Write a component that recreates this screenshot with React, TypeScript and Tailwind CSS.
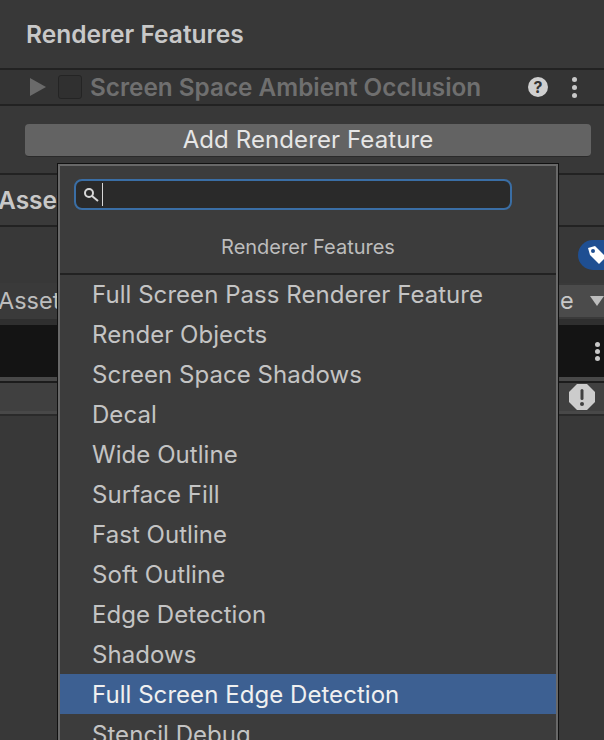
const items = [
  "Full Screen Pass Renderer Feature",
  "Render Objects",
  "Screen Space Shadows",
  "Decal",
  "Wide Outline",
  "Surface Fill",
  "Fast Outline",
  "Soft Outline",
  "Edge Detection",
  "Shadows",
  "Full Screen Edge Detection",
  "Stencil Debug",
];

const selected = "Full Screen Edge Detection";

export default function App() {
  return (
    <div className="relative h-[740px] w-[604px] overflow-hidden bg-[#383838] font-['Inter',sans-serif]">
      {/* Inspector behind the popup */}
      <div className="flex h-[70px] items-center border-b-2 border-[#222222] pl-[26px] pt-[1px]">
        <span className="text-[24.5px] font-semibold text-[#c8c8c8]">Renderer Features</span>
      </div>
      <div className="flex h-[36px] items-center border-b-2 border-[#222222] bg-[#343434] pl-[26px] pr-[27px]">
        <svg width="16" height="18" viewBox="0 0 16 18" className="ml-[4px]">
          <path d="M0 0 L16 9 L0 18 Z" fill="#6a6a6a" />
        </svg>
        <div className="ml-[12px] h-[24px] w-[24px] rounded-[3px] border border-[#242424] bg-[#303030]" />
        <span className="ml-[8px] text-[24.3px] font-semibold text-[#6f6f6f]">Screen Space Ambient Occlusion</span>
        <div className="ml-auto flex items-center gap-[24px]">
          <div className="flex h-[20px] w-[20px] items-center justify-center rounded-full bg-[#cfcfcf] text-[16px] font-bold text-[#343434]">?</div>
          <div className="flex flex-col gap-[3px]">
            <div className="h-[5px] w-[5px] rounded-full bg-[#c8c8c8]" />
            <div className="h-[5px] w-[5px] rounded-full bg-[#c8c8c8]" />
            <div className="h-[5px] w-[5px] rounded-full bg-[#c8c8c8]" />
          </div>
        </div>
      </div>
      <div className="h-[69px] border-b-2 border-[#222222] px-[25px] pt-[18px]">
        <div className="flex h-[33px] w-[566px] items-center justify-center rounded-[4px] border-b border-[#2a2a2a] bg-[#636363] text-[24px] tracking-[0.1px] text-[#e6e6e6]">
          Add Renderer Feature
        </div>
      </div>
      <div className="flex h-[52px] items-center border-b-2 border-[#222222] bg-[#3a3a3a]">
        <span className="-ml-[2px] text-[24.5px] font-semibold text-[#c8c8c8]">Asset</span>
      </div>
      <div className="flex h-[56px] items-center justify-end overflow-hidden">
        <div className="-mr-[22px] flex h-[30px] w-[48px] items-center rounded-full bg-[#1f4f92] pl-[9px]">
          <svg width="20" height="20" viewBox="0 0 20 20">
            <path d="M1 3 L8 1 L19 12 L12 19 L3 10 Z" fill="#ffffff" />
            <circle cx="6" cy="6" r="2" fill="#1f4f92" />
          </svg>
        </div>
      </div>
      <div className="flex h-[36px] items-center bg-[#3a3a3a] text-[23.5px] text-[#bdbdbd]">
        <span className="-ml-[2px] w-[560px]">Asset</span>
        <div className="flex h-[32px] flex-1 items-center justify-between bg-[#4b4b4b] pl-[2px]">
          <span className="text-[#c8c8c8]">e</span>
          <svg width="14" height="10" viewBox="0 0 14 10">
            <path d="M0 0 L14 0 L7 10 Z" fill="#bdbdbd" />
          </svg>
        </div>
      </div>
      <div className="h-[6px] bg-[#2f2f2f]" />
      <div className="flex h-[52px] items-center justify-end bg-[#141414] pr-[4px]">
        <div className="flex flex-col gap-[2px]">
          <div className="h-[5px] w-[5px] rounded-full bg-[#c8c8c8]" />
          <div className="h-[5px] w-[5px] rounded-full bg-[#c8c8c8]" />
          <div className="h-[5px] w-[5px] rounded-full bg-[#c8c8c8]" />
        </div>
      </div>
      <div className="h-[4px] bg-[#484848]" />
      <div className="h-[2px] bg-[#1c1c1c]" />
      <div className="flex h-[28px] items-center justify-end bg-[#404040] pr-[9px]">
        <svg width="26" height="26" viewBox="0 0 26 26">
          <path d="M8 0 H18 L26 8 V18 L18 26 H8 L0 18 V8 Z" fill="#cccccc" />
          <rect x="11.5" y="5" width="3" height="11" rx="1.5" fill="#404040" />
          <circle cx="13" cy="20" r="2" fill="#404040" />
        </svg>
      </div>
      <div className="h-[3px] bg-[#484848]" />
      <div className="h-[2px] bg-[#2a2a2a]" />

      {/* Search popup */}
      <div className="absolute left-[57px] top-[163px] h-[577px] w-[502px] border border-b-0 border-[#111111] bg-[#3c3c3c]">
        <div className="h-full overflow-hidden border-x-2 border-t-2 border-[#686868]">
          <div className="px-[14px] pt-[13px]">
            <div className="flex h-[31px] w-[438px] items-center rounded-[8px] border-2 border-[#3a6ea5] bg-[#2a2a2a] pl-[7px]">
              <svg width="16" height="16" viewBox="0 0 16 16" fill="none" stroke="#d8d8d8" strokeWidth="2">
                <circle cx="6" cy="6" r="4" />
                <path d="M9 9 L15 14" />
              </svg>
              <div className="ml-[3px] h-[23px] w-[1px] bg-[#d8d8d8]" />
            </div>
          </div>
          <div className="flex h-[65px] items-center justify-center border-b-2 border-[#222222] pt-[10px] text-[20px] text-[#bdbdbd]">
            Renderer Features
          </div>
          <div className="-mt-[1px]">
            {items.map((item) => (
              <div
                key={item}
                className={`flex h-[40px] shrink-0 items-center pl-[32px] pt-[2px] text-[24px] tracking-[0.05px] ${
                  item === selected ? "bg-[#3d6092] text-[#f0f0f0]" : "text-[#c4c4c4]"
                }`}
              >
                {item}
              </div>
            ))}
          </div>
        </div>
      </div>
    </div>
  );
}
